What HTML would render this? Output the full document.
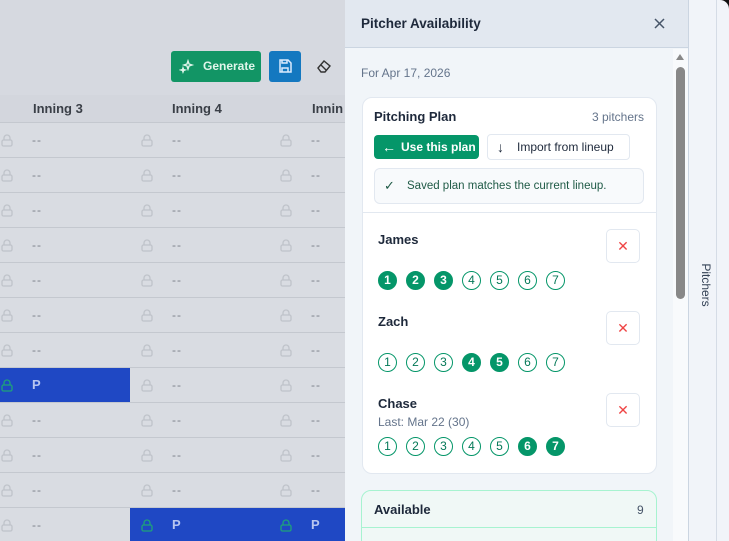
<!DOCTYPE html>
<html><head><style>
*{box-sizing:border-box;margin:0;padding:0}
html,body{width:729px;height:541px;overflow:hidden}
body{position:relative;font-family:"Liberation Sans",sans-serif;background:#d6d9e0}
.abs{position:absolute}
.row{position:absolute;left:0;width:345px;height:35px;border-top:1px solid #c4c8cf;background:#d9dce2}
.lk{position:absolute;top:11px;width:12px;height:13px}
.dash{position:absolute;top:10px;font-size:12px;color:#7c818a;letter-spacing:1px}
.blue{position:absolute;top:0;height:35px;background:#1f48c4}
.P{position:absolute;top:9px;color:#b8c6f0;font-weight:bold;font-size:13px}
.c{display:inline-block;width:19px;height:19px;border-radius:50%;border:1.5px solid #059669;color:#047857;font-size:12px;text-align:center;line-height:16px;margin-right:9px}
.c.f{background:#059669;color:#fff;font-weight:bold}
.xb{position:absolute;left:606px;width:34px;height:34px;border:1px solid #e2e8f0;border-radius:5px;background:#fff;color:#ef4444;font-size:14px;text-align:center;line-height:32px}
.nm{position:absolute;left:378px;font-size:13px;font-weight:bold;color:#1e293b}
</style></head><body>
<div class="abs" style="left:171px;top:51px;width:90px;height:31px;background:#129565;border-radius:3px;color:#dff5ea;font-size:12px;font-weight:bold;line-height:31px;padding-left:32px">Generate
<svg class="abs" style="left:8px;top:8px" width="16" height="16" viewBox="0 0 16 16" fill="none" stroke="#dff5ea" stroke-width="1.4"><path d="M9 2l1 3 3 1-3 1-1 3-1-3-3-1 3-1z"/><path d="M4 9l.6 1.6L6 11l-1.4.5L4 13l-.5-1.5L2 11l1.5-.4z"/></svg></div>
<div class="abs" style="left:269px;top:51px;width:32px;height:31px;background:#1478c0;border-radius:3px">
<svg class="abs" style="left:9px;top:8px" width="14" height="14" viewBox="0 0 14 14" fill="none" stroke="#dbeafe" stroke-width="1.5"><path d="M2 1h8l3 3v9H2z"/><path d="M4 1v3h5V1M4 13V9h6v4"/></svg></div>
<svg class="abs" style="left:316px;top:58px" width="16" height="16" viewBox="0 0 16 16" fill="none" stroke="#333" stroke-width="1.4"><path d="M2 10l6-7 6 5-5 6H5z M5 7l5 5"/></svg>
<div class="abs" style="left:0;top:95px;width:345px;height:27px;background:#d3d6dd"></div>
<div class="abs" style="left:33px;top:101px;font-size:13px;font-weight:bold;color:#3a3f47">Inning 3</div>
<div class="abs" style="left:172px;top:101px;font-size:13px;font-weight:bold;color:#3a3f47">Inning 4</div>
<div class="abs" style="left:312px;top:101px;font-size:13px;font-weight:bold;color:#3a3f47">Innin</div>
<div id="rows"></div>
<script>
var h='';
for(var i=0;i<12;i++){
 var t=122+i*35;
 h+='<div class="row" style="top:'+t+'px">';
 var xs=[1,141,280],ds=[32,172,311];
 for(var j=0;j<3;j++){
  var bl=(i==7&&j==0)||(i==11&&j>0);
  if(bl){h+='<div class="blue" style="left:'+(j==0?0:130)+'px;width:'+(j==0?130:215)+'px"></div>';}
 }
 for(var j=0;j<3;j++){
  var bl=(i==7&&j==0)||(i==11&&j>0);
  var col=bl?'#1ea27a':'#bfc3ca';
  h+='<svg class="lk" style="left:'+xs[j]+'px" viewBox="0 0 12 13" fill="none" stroke="'+col+'" stroke-width="1.3"><rect x="1" y="6" width="10" height="6" rx="1.5"/><path d="M3 6V4a3 3 0 0 1 6 0v2"/></svg>';
  h+=bl?'<div class="P" style="left:'+ds[j]+'px">P</div>':'<div class="dash" style="left:'+ds[j]+'px">--</div>';
 }
 h+='</div>';
}
document.getElementById('rows').innerHTML=h;
</script>
<div class="abs" style="left:345px;top:0;width:343px;height:541px;background:#f1f5f9"></div>
<div class="abs" style="left:345px;top:0;width:343px;height:48px;background:#e2e8f0;border-bottom:1px solid #cbd5e1"></div>
<div class="abs" style="left:361px;top:16px;font-size:13.5px;font-weight:bold;color:#1e293b">Pitcher Availability</div>
<svg class="abs" style="left:654px;top:18px" width="11" height="11" viewBox="0 0 11 11" stroke="#475569" stroke-width="1.5"><path d="M1 1l9 9M10 1l-9 9"/></svg>
<div class="abs" style="left:673px;top:49px;width:15px;height:492px;background:#f8fafc"></div>
<div class="abs" style="left:676px;top:54px;width:0;height:0;border-left:4px solid transparent;border-right:4px solid transparent;border-bottom:6px solid #888"></div>
<div class="abs" style="left:676px;top:67px;width:9px;height:232px;background:#888;border-radius:5px"></div>
<div class="abs" style="left:361px;top:66px;font-size:12px;color:#64748b">For Apr 17, 2026</div>
<div class="abs" style="left:362px;top:97px;width:295px;height:377px;background:#fff;border:1px solid #e2e8f0;border-radius:10px"></div>
<div class="abs" style="left:374px;top:109px;font-size:13px;font-weight:bold;color:#1e293b">Pitching Plan</div>
<div class="abs" style="left:592px;top:110px;font-size:12px;color:#64748b">3 pitchers</div>
<div class="abs" style="left:374px;top:135px;width:105px;height:24px;background:#059669;border-radius:4px;color:#fff;font-size:12px;font-weight:bold;line-height:24px;padding-left:27px">Use this plan<span class="abs" style="left:8px;top:0;font-size:14px">←</span></div>
<div class="abs" style="left:487px;top:134px;width:143px;height:26px;border:1px solid #e2e8f0;border-radius:4px;color:#1e293b;font-size:12px;line-height:24px;padding-left:29px">Import from lineup<span class="abs" style="left:9px;top:0;font-size:14px">↓</span></div>
<div class="abs" style="left:374px;top:168px;width:270px;height:36px;border:1px solid #e2e8f0;border-radius:6px;background:#f8fafc;color:#1f5a46;font-size:11.5px;line-height:34px;padding-left:32px">Saved plan matches the current lineup.<span class="abs" style="left:9px;top:0;font-size:13px">✓</span></div>
<div class="abs" style="left:363px;top:212px;width:293px;height:1px;background:#e2e8f0"></div>
<div class="nm" style="top:232px">James</div>
<div class="xb" style="top:229px">✕</div>
<div class="abs" style="left:378px;top:271px"><span class="c f">1</span><span class="c f">2</span><span class="c f">3</span><span class="c">4</span><span class="c">5</span><span class="c">6</span><span class="c">7</span></div>
<div class="nm" style="top:314px">Zach</div>
<div class="xb" style="top:311px">✕</div>
<div class="abs" style="left:378px;top:353px"><span class="c">1</span><span class="c">2</span><span class="c">3</span><span class="c f">4</span><span class="c f">5</span><span class="c">6</span><span class="c">7</span></div>
<div class="nm" style="top:396px">Chase</div>
<div class="abs" style="left:378px;top:415px;font-size:12px;color:#64748b">Last: Mar 22 (30)</div>
<div class="xb" style="top:393px">✕</div>
<div class="abs" style="left:378px;top:437px"><span class="c">1</span><span class="c">2</span><span class="c">3</span><span class="c">4</span><span class="c">5</span><span class="c f">6</span><span class="c f">7</span></div>
<div class="abs" style="left:361px;top:490px;width:296px;height:60px;background:#f0f8f6;border:1px solid #a7f3d0;border-radius:10px"></div>
<div class="abs" style="left:362px;top:527px;width:294px;height:1px;background:#a7f3d0"></div>
<div class="abs" style="left:374px;top:502px;font-size:13px;font-weight:bold;color:#1e293b">Available</div>
<div class="abs" style="left:637px;top:503px;font-size:12px;color:#475569">9</div>
<div class="abs" style="left:688px;top:0;width:41px;height:541px;background:#f1f4f9;border-left:1px solid #cbd5e1"></div>
<div class="abs" style="left:716px;top:0;width:13px;height:12px;background:#111"></div>
<div class="abs" style="left:716px;top:0;width:13px;height:541px;background:#f1f4f9;border-left:1px solid #d5dce6;border-top-right-radius:9px"></div>
<div class="abs" style="left:681px;top:278px;width:50px;transform:rotate(90deg);font-size:12px;color:#334155;text-align:center">Pitchers</div>
</body></html>
